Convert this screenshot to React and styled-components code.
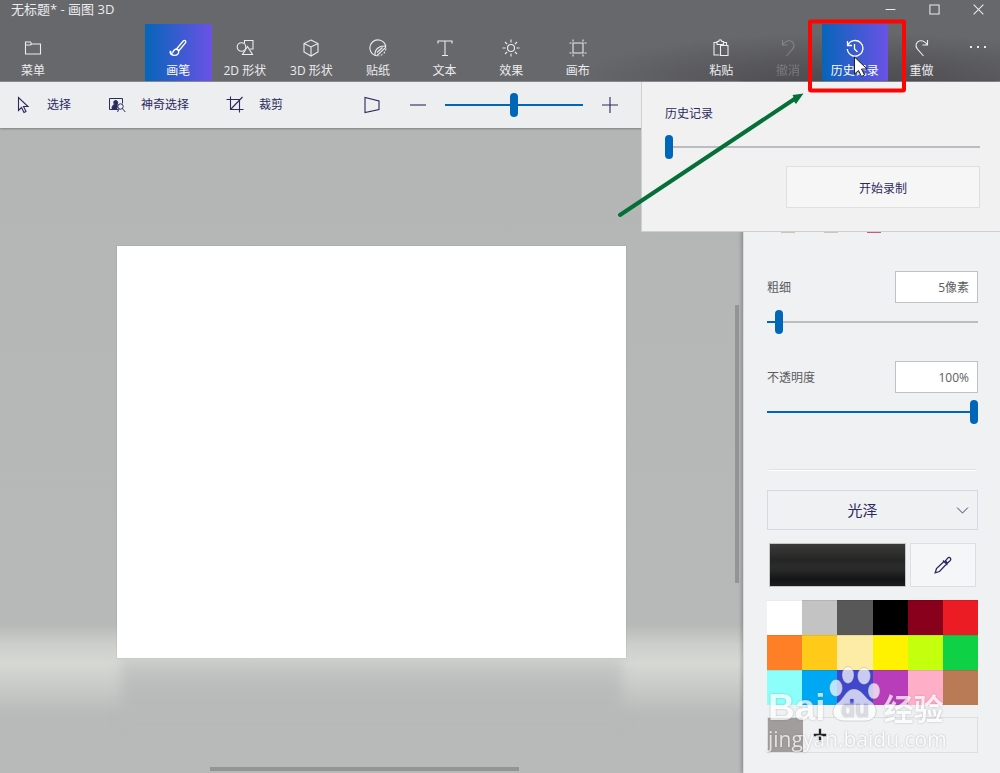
import React from "react";
import styled, { createGlobalStyle, css } from "styled-components";

const GlobalStyle = createGlobalStyle`
  *, *::before, *::after { box-sizing: border-box; }
  body {
    margin: 0;
    font-family: "Open Sans", "Noto Sans CJK SC", sans-serif;
    font-size: 12px;
    line-height: 16px;
  }
  button, input, select { font: inherit; color: inherit; margin: 0; }
  button { padding: 0; border: 0; background: none; }
`;

const ink = "#2b2a5e";
const accent = "#0067b8";

const Window = styled.div`
  position: relative;
  display: flex;
  flex-direction: column;
  min-height: 100vh;
  overflow: hidden;
  background: #eff1f3;
`;

/* ---------- header ---------- */

const Header = styled.header`
  color: #ececee;
  background:
    radial-gradient(ellipse 28% 60% at 85% 100%, rgba(50, 48, 54, 0.55), transparent),
    #67686c;
  border-bottom: 1px solid #8a8b8e;
`;

const TitleBar = styled.div`
  display: flex;
  justify-content: space-between;
  height: 24px;
  padding-left: 11px;
`;

const Title = styled.h1`
  margin: 0;
  font-size: 13px;
  font-weight: 400;
  line-height: 18px;
`;

const WindowControls = styled.div`
  display: flex;
`;

const WindowButton = styled.button`
  display: grid;
  place-items: center;
  width: 44px;
  height: 18px;
`;

const Ribbon = styled.nav`
  display: flex;
  height: 57px;
`;

const TabGroup = styled.div`
  display: grid;
  grid-auto-flow: column;
  grid-auto-columns: 1fr;
  width: ${(p) => p.$width};
  margin-left: ${(p) => p.$start};
`;

const TabButton = styled.button`
  display: flex;
  flex-direction: column;
  align-items: center;
  gap: 6px;
  padding-top: 15px;
  white-space: nowrap;
  opacity: ${(p) => (p.disabled ? 0.25 : 1)};
  color: inherit;
  ${(p) =>
    p.$active &&
    css`
      color: #fff;
      background: linear-gradient(to right, #0665b9, #6a52e6);
    `}
`;

const MenuButton = styled(TabButton)`
  width: 66px;
`;

const MoreButton = styled.button`
  display: grid;
  place-items: center;
  width: 45px;
  height: 46px;
`;

/* ---------- body ---------- */

const Body = styled.div`
  flex: 1;
  display: flex;
`;

const Main = styled.main`
  flex: 1;
  min-width: 0;
  display: flex;
  flex-direction: column;
`;

const ToolStrip = styled.div`
  display: flex;
  align-items: center;
  height: 46px;
  padding-left: 14px;
  color: ${ink};
  background: #eceef0;
  z-index: 1;
  box-shadow: 0 1px 2px rgba(0, 0, 0, 0.3);
`;

const ToolButton = styled.button`
  display: flex;
  align-items: center;
  gap: 15px;
  margin-right: 37px;
  white-space: nowrap;
`;

const ZoomGroup = styled.div`
  display: flex;
  align-items: center;
  gap: 18px;
  margin-left: 43px;
`;

const IconButton = styled.button`
  display: grid;
  place-items: center;
`;

const ViewButton = styled(IconButton)`
  margin-right: 10px;
`;

const Workspace = styled.section`
  position: relative;
  flex: 1;
  display: grid;
  place-items: center;
  padding: 118px 117px 115px;
  background: linear-gradient(
    to bottom,
    #b4b6b5,
    #b7b9b8 77%,
    #cccecb 80%,
    #d6d8d4 83%,
    #cbcdca 86%,
    #b8baba 91%,
    #b8baba
  );
`;

const Paper = styled.div`
  position: relative;
  width: 100%;
  height: 100%;
  min-height: 412px;
  background: #fff;
  box-shadow: 0 0 1px rgba(0, 0, 0, 0.25);

  &::after {
    content: "";
    position: absolute;
    top: 100%;
    left: 4px;
    right: 4px;
    height: 64px;
    background: linear-gradient(to bottom, #cbcdca, #bec0bf 30%, #b8baba 60%);
    filter: blur(6px);
    clip-path: inset(0 -20px -20px -20px);
  }
`;

const ScrollThumb = styled.div`
  position: absolute;
  background: #939594;
  ${(p) =>
    p.$vertical
      ? css`
          right: 4px;
          top: 177px;
          bottom: 190px;
          width: 4px;
        `
      : css`
          left: 210px;
          right: 224px;
          bottom: 2px;
          height: 4px;
        `}
`;

/* ---------- sliders ---------- */

const RangeInput = styled.input`
  appearance: none;
  display: block;
  width: ${(p) => p.$width || "100%"};
  height: 24px;
  background: linear-gradient(
      to right,
      ${accent} var(--fill),
      ${(p) => p.$rest || "#bcbdc0"} var(--fill)
    )
    center / 100% 2px no-repeat;

  &::-webkit-slider-thumb {
    appearance: none;
    width: 8px;
    height: 24px;
    border-radius: 4px;
    background: ${accent};
  }
`;

function Slider({ value, ...rest }) {
  return (
    <RangeInput
      type="range"
      min="0"
      max="100"
      defaultValue={value}
      style={{ "--fill": `${value}%` }}
      {...rest}
    />
  );
}

/* ---------- side panel ---------- */

const SidePanel = styled.aside`
  width: 257px;
  padding: 0 22px 20px 23px;
  border-left: 1px solid #d9dbdc;
  box-shadow: -2px 0 3px rgba(0, 0, 0, 0.2);
  background: #eff1f3;
  color: #5b5d60;
  z-index: 1;
`;

const BrushRow = styled.div`
  display: flex;
  align-items: flex-end;
  gap: 29px;
  height: 151px;
  padding-left: 14px;
`;

const Brush = styled.button`
  width: 14px;
  height: 40px;
  background: ${(p) => p.$color};
`;

const Setting = styled.div`
  height: 90px;
`;

const SettingHead = styled.div`
  display: flex;
  align-items: center;
  justify-content: space-between;
  margin-bottom: 7px;
`;

const SettingLabel = styled.label`
  padding-top: 2px;
`;

const ValueInput = styled.input`
  width: 83px;
  height: 32px;
  padding: 0 8px;
  border: 1px solid #bfc1c4;
  background: #fff;
  text-align: right;
  outline: 0;
`;

const Settings = styled.div`
  padding-top: 38px;
`;

const Divider = styled.hr`
  height: 2px;
  margin: 18px 2px 19px;
  border: 0;
  background: linear-gradient(#dfe1e3 50%, #fff 50%);
`;

const SelectBox = styled.div`
  display: grid;
  align-items: center;
  height: 40px;
  color: ${ink};

  > * {
    grid-area: 1 / 1;
  }

  > svg {
    justify-self: end;
    margin-right: 8px;
    pointer-events: none;
  }
`;

const MaterialSelect = styled.select`
  appearance: none;
  width: 100%;
  height: 40px;
  padding: 0 20px 0 0;
  border: 1px solid #d5d9e4;
  border-radius: 0;
  background: none;
  font-size: 15px;
  text-align: center;
  text-align-last: center;
`;

const ColorRow = styled.div`
  display: flex;
  gap: 4px;
  height: 44px;
  margin: 13px 2px;
`;

const CurrentColor = styled.button`
  flex: 1;
  border: 1px solid #c4c5c6;
  background: linear-gradient(#3b3b39, #242625 38%, #2b2b2b 55%, #262626 65%, #141414 85%, #1c1c1c);
`;

const PickerButton = styled.button`
  display: grid;
  place-items: center;
  width: 66px;
  border: 1px solid #dcdee1;
  background: #f4f6f8;
  color: ${ink};
`;

const Palette = styled.div`
  display: grid;
  grid-template-columns: repeat(6, 1fr);
  grid-auto-rows: 35px;
`;

const Swatch = styled.button`
  background: ${(p) => p.$color};
  box-shadow: inset 0 1px rgba(0, 0, 0, 0.08);
`;

const CustomColors = styled.div`
  display: flex;
  height: 36px;
  margin-top: 12px;
  border: 1px solid #dcdee0;
`;

const CustomSwatch = styled.button`
  width: 35px;
  background: #a19d9b;
`;

const AddColor = styled.button`
  display: grid;
  place-items: center;
  width: 34px;
  color: #222;
`;

/* ---------- history flyout ---------- */

const HistoryFlyout = styled.section`
  position: absolute;
  top: 82px;
  right: 0;
  width: 359px;
  padding: 24px 20px 23px 23px;
  border: 1px solid #cdcfd0;
  border-width: 0 0 1px 1px;
  background: #f1f1f1;
  color: ${ink};
  z-index: 2;
`;

const FlyoutLabel = styled.label`
  display: block;
  margin-bottom: 13px;
`;

const RecordButton = styled.button`
  display: block;
  width: 194px;
  height: 42px;
  margin: 7px 0 0 auto;
  padding-top: 3px;
  border: 1px solid #dfdfdf;
  background: #f6f6f6;
`;

/* ---------- overlays ---------- */

const Annotation = styled.svg`
  position: absolute;
  top: 0;
  right: 0;
  z-index: 3;
  pointer-events: none;
`;

const Watermark = styled.div`
  position: absolute;
  right: 52px;
  bottom: 22px;
  width: 180px;
  color: #fff;
  opacity: 0.72;
  text-shadow: 0 0 2px rgba(90, 90, 90, 0.6);
  white-space: nowrap;
  pointer-events: none;
  z-index: 3;
`;

const WatermarkLogo = styled.div`
  display: flex;
  align-items: flex-end;
  height: 64px;
  font: 700 37px/38px "Liberation Sans", sans-serif;
`;

const PawMark = styled.svg`
  margin-bottom: 4px;
`;

const WatermarkName = styled.span`
  margin-left: 4px;
  font: 700 30px/40px "Noto Sans CJK SC", sans-serif;
`;

const WatermarkUrl = styled.div`
  font-size: 21px;
  line-height: 24px;
`;

/* ---------- icons ---------- */

function Icon({ size = 18, children }) {
  return (
    <svg
      width={size}
      height={size}
      viewBox="0 0 18 18"
      fill="none"
      stroke="currentColor"
      strokeWidth="1.1"
      aria-hidden="true"
    >
      {children}
    </svg>
  );
}

const icons = {
  folder: <path d="M1.500 15V3h5l1 2h9v10zM1.500 6h5l1-1" />,
  brush: (
    <path d="M7.500 10 14.300 2c.6-.7 1.500-.8 2.100-.3s.6 1.400 0 2.100L9.700 12M7.500 10c1.500.2 2.200 1.200 2.200 2.500 0 2.500-1.700 3.800-4.200 3.800-2 0-3.700-.5-4.200-2.300 1 .3 2 .1 2.500-.7.7-1.700 1.700-3.300 3.700-3.300zM7.500 10l2.200 2M1.300 14v-1.500h1" strokeWidth="1.300" />
  ),
  shapes2d: (
    <>
      <path d="M8.500 4V1.500h8.500v8.500h-3" />
      <circle cx="5.500" cy="8" r="4.300" />
      <path d="M11.500 7.500 6.500 15.500h10z" />
    </>
  ),
  cube: <path d="M9 1 16 4.500v8.500L9 17 2 13V4.500zM2 4.500 9 8l7-3.500M9 8v9" />,
  sticker: (
    <>
      <path d="M6.500 16.500A8 8 0 1 1 16.700 7" />
      <path d="M6 16.200C5.500 10.500 10 6.500 16.700 7c.2 1-.3 1.700-1 2.300L8 16.500c-.5.400-1.300.3-2-.3" />
      <path d="M16.900 9.500c-.3 4-3.400 7-7.400 7.400" strokeDasharray="2 1.500" />
      <path d="m8 13.500 5.500-5" />
    </>
  ),
  text: <path d="M2 4.500V2h14v2.500M9 2v14.500M6 16.500h6" />,
  effects: (
    <>
      <circle cx="9" cy="9" r="3.500" />
      <path d="M9 .5v3M9 14.500v3M.5 9h3M14.500 9h3M3 3l2.100 2.100M12.900 12.900 15 15M15 3l-2.100 2.100M5.100 12.900 3 15" />
    </>
  ),
  canvas: (
    <>
      <path d="M4 4h10v10H4z" />
      <path d="M4 .5v2M14 .5v2M4 15.500v2M14 15.500v2M.5 4h2M.5 14h2M15.500 4h2M15.500 14h2" />
    </>
  ),
  paste: (
    <path d="M7.500 16H2V3.500h3M11.500 3.500h3v3M5 5.500v-3h1.700c0-2.200 3.100-2.200 3.100 0h1.700v3zM8.500 6.500H16v10H8.500z" />
  ),
  undo: <path d="M3.500 1v5h5M3.500 6C5.500 3 8.200 1.300 11 1.800c4 .8 5.200 5 2.700 8L7.500 17" />,
  redo: <path d="M14.500 1v5h-5M14.500 6C12.500 3 9.800 1.300 7 1.800c-4 .8-5.200 5-2.700 8l6.200 7.200" />,
  history: (
    <g strokeWidth="1.300">
      <path d="M1.500 2v4.500H6M2 6a7.800 7.800 0 1 1-.7 4" />
      <path d="M8.500 5v5l3 3" />
    </g>
  ),
  pointer: <path d="M4.500 1.500v13l3-3 2.500 5 2-1-2.500-5h4.500z" />,
  crop: <path d="M4.500.5v13h13M.5 3.500h13v13M4.500 13.500 16.500 1" />,
  perspective: <path d="M2 1.500v15l14-3v-8.500z" />,
  minus: <path d="M1 9h16" />,
  plus: <path d="M1 9h16M9 1v16" />,
  chevron: <path d="M2.500 5.500 9 12l6.500-6.500" />,
  dropper: (
    <path d="m10 5.500-7.500 7-1.300 4.300 4.300-1.300 7-7.500M9 4.500l4.500 4.500M10.500 6l3-3.700c1-1.200 2.300-1.200 3 0 .5.900.3 1.700-.5 2.500L12.500 8M11.500 5l2.500 2.500" strokeWidth="1.300" />
  ),
};

const tools = [
  ["brush", "画笔", true],
  ["shapes2d", "2D 形状"],
  ["cube", "3D 形状"],
  ["sticker", "贴纸"],
  ["text", "文本"],
  ["effects", "效果"],
  ["canvas", "画布"],
];

const palette = [
  ["白色", "#ffffff"], ["浅灰", "#c3c3c3"], ["深灰", "#585858"],
  ["黑色", "#000000"], ["深红", "#88001b"], ["红色", "#ec1c24"],
  ["橙色", "#ff7f27"], ["金色", "#ffca18"], ["浅黄", "#fdeca6"],
  ["黄色", "#fff200"], ["酸橙", "#c4ff0e"], ["绿色", "#0ed145"],
  ["青色", "#8cfffb"], ["蓝色", "#00a8f3"], ["靛青", "#3f48cc"],
  ["紫色", "#b83dba"], ["粉色", "#ffaec8"], ["棕色", "#b97a56"],
];

function MagicSelectIcon() {
  return (
    <svg width="18" height="18" viewBox="0 0 18 18" fill="none" stroke="currentColor" aria-hidden="true">
      <path d="M10 13.500H1.500v-11h13v5" />
      <path d="M4 12.500c0-2.500 1-3.500 2.500-4C5 6 6 4.500 7.700 4.500S10.400 6 9.200 8.500L9 12.500z" fill="currentColor" />
      <circle cx="12.500" cy="10.500" r="2.700" />
      <path d="m14.300 12.500 3 3.500M11 13l-1.500 3" />
    </svg>
  );
}

function Tab({ icon, label, active, disabled }) {
  return (
    <TabButton $active={active} disabled={disabled}>
      <Icon>{icons[icon]}</Icon>
      {label}
    </TabButton>
  );
}

export default function App() {
  return (
    <Window>
      <GlobalStyle />
      <Header>
        <TitleBar>
          <Title>无标题* - 画图 3D</Title>
          <WindowControls>
            <WindowButton aria-label="最小化">
              <Icon size={11}><path d="M1 9h16" strokeWidth="1.700" /></Icon>
            </WindowButton>
            <WindowButton aria-label="最大化">
              <Icon size={11}><path d="M1.500 1.500h15v15h-15z" strokeWidth="1.700" /></Icon>
            </WindowButton>
            <WindowButton aria-label="关闭">
              <Icon size={11}><path d="m1 1 16 16M17 1 1 17" strokeWidth="1.700" /></Icon>
            </WindowButton>
          </WindowControls>
        </TitleBar>
        <Ribbon>
          <MenuButton>
            <Icon>{icons.folder}</Icon>
            菜单
          </MenuButton>
          <TabGroup $width="466px" $start="79px">
            {tools.map(([icon, label, active]) => (
              <Tab key={icon} icon={icon} label={label} active={active} />
            ))}
          </TabGroup>
          <TabGroup $width="267px" $start="auto">
            <Tab icon="paste" label="粘贴" />
            <Tab icon="undo" label="撤消" disabled />
            <Tab icon="history" label="历史记录" active />
            <Tab icon="redo" label="重做" />
          </TabGroup>
          <MoreButton aria-label="更多">
            <Icon>
              <path d="M1 9h2M8 9h2M15 9h2" strokeWidth="2" />
            </Icon>
          </MoreButton>
        </Ribbon>
      </Header>

      <Body>
        <Main>
          <ToolStrip>
            <ToolButton><Icon>{icons.pointer}</Icon>选择</ToolButton>
            <ToolButton><MagicSelectIcon />神奇选择</ToolButton>
            <ToolButton><Icon>{icons.crop}</Icon>裁剪</ToolButton>
            <ZoomGroup>
              <ViewButton aria-label="三维视图"><Icon>{icons.perspective}</Icon></ViewButton>
              <IconButton aria-label="缩小"><Icon>{icons.minus}</Icon></IconButton>
              <Slider value={50} $width="138px" $rest={accent} aria-label="缩放" />
              <IconButton aria-label="放大"><Icon>{icons.plus}</Icon></IconButton>
            </ZoomGroup>
          </ToolStrip>
          <Workspace>
            <Paper />
            <ScrollThumb $vertical />
            <ScrollThumb />
          </Workspace>
        </Main>

        <SidePanel>
          <BrushRow>
            <Brush $color="#d3c4ab" aria-label="记号笔" />
            <Brush $color="#d3c4b4" aria-label="钢笔" />
            <Brush $color="#c9588c" aria-label="蜡笔" />
          </BrushRow>
          <Settings>
            <Setting>
              <SettingHead>
                <SettingLabel htmlFor="thickness">粗细</SettingLabel>
                <ValueInput id="thickness" defaultValue="5像素" />
              </SettingHead>
              <Slider value={4} aria-label="粗细" />
            </Setting>
            <Setting>
              <SettingHead>
                <SettingLabel htmlFor="opacity">不透明度</SettingLabel>
                <ValueInput id="opacity" defaultValue="100%" />
              </SettingHead>
              <Slider value={100} aria-label="不透明度" />
            </Setting>
          </Settings>
          <Divider />
          <SelectBox>
            <MaterialSelect aria-label="材质" defaultValue="gloss">
              <option value="gloss">光泽</option>
            </MaterialSelect>
            <Icon size={15}>{icons.chevron}</Icon>
          </SelectBox>
          <ColorRow>
            <CurrentColor aria-label="当前颜色" />
            <PickerButton aria-label="颜色选取器"><Icon>{icons.dropper}</Icon></PickerButton>
          </ColorRow>
          <Palette>
            {palette.map(([name, color]) => (
              <Swatch key={color} $color={color} aria-label={name} />
            ))}
          </Palette>
          <CustomColors>
            <CustomSwatch aria-label="自定义颜色" />
            <AddColor aria-label="添加颜色">
              <Icon size={14}><path d="M1 9h16M9 1v16" strokeWidth="3" /></Icon>
            </AddColor>
          </CustomColors>
        </SidePanel>
      </Body>

      <HistoryFlyout>
        <FlyoutLabel htmlFor="history">历史记录</FlyoutLabel>
        <Slider id="history" value={0} />
        <RecordButton>开始录制</RecordButton>
      </HistoryFlyout>

      <Annotation width="400" height="230" viewBox="0 0 400 230" aria-hidden="true">
        <rect x="210" y="21.500" width="94" height="69" rx="1" fill="none" stroke="#fb0505" strokeWidth="4" />
        <path d="M20 215 196 98" stroke="#047038" strokeWidth="4" strokeLinecap="round" />
        <path d="m203.500 93.500-11 1.500 1.500 3-2 1 4 5z" fill="#047038" />
        <path d="M254.500 57v17l4-3.500 3 6 3-1.500-3-6h5.500z" fill="#fff" stroke="#222" strokeWidth="1" />
      </Annotation>

      <Watermark>
        <WatermarkLogo>
          Bai
          <PawMark width="54" height="60" viewBox="0 0 54 60" fill="currentColor" aria-hidden="true">
            <defs>
              <linearGradient id="letters" gradientUnits="userSpaceOnUse" x1="0" y1="38" x2="0" y2="42">
                <stop offset="0" stopColor="#3f48cc" />
                <stop offset="1" stopColor="#d3d5dc" />
              </linearGradient>
            </defs>
            <g stroke="rgba(90,90,90,0.3)" strokeWidth="1">
              <ellipse cx="10" cy="25" rx="6.500" ry="8.500" />
              <ellipse cx="22" cy="12" rx="6" ry="8.500" />
              <ellipse cx="38" cy="13" rx="6.500" ry="8.500" />
              <ellipse cx="48" cy="28" rx="6" ry="8" />
              <path d="M28 26c7 0 10 7 15 11 5 3 8 8 7 13-1 6-6 8-12 8H19c-7 0-12-3-12-9 0-5 3-8 7-11 4-4 7-12 14-12z" />
            </g>
            <text x="15" y="54" fontFamily="Liberation Sans, sans-serif" fontWeight="700" fontSize="23" fill="url(#letters)">
              du
            </text>
          </PawMark>
          <WatermarkName>经验</WatermarkName>
        </WatermarkLogo>
        <WatermarkUrl>jingyan.baidu.com</WatermarkUrl>
      </Watermark>
    </Window>
  );
}
